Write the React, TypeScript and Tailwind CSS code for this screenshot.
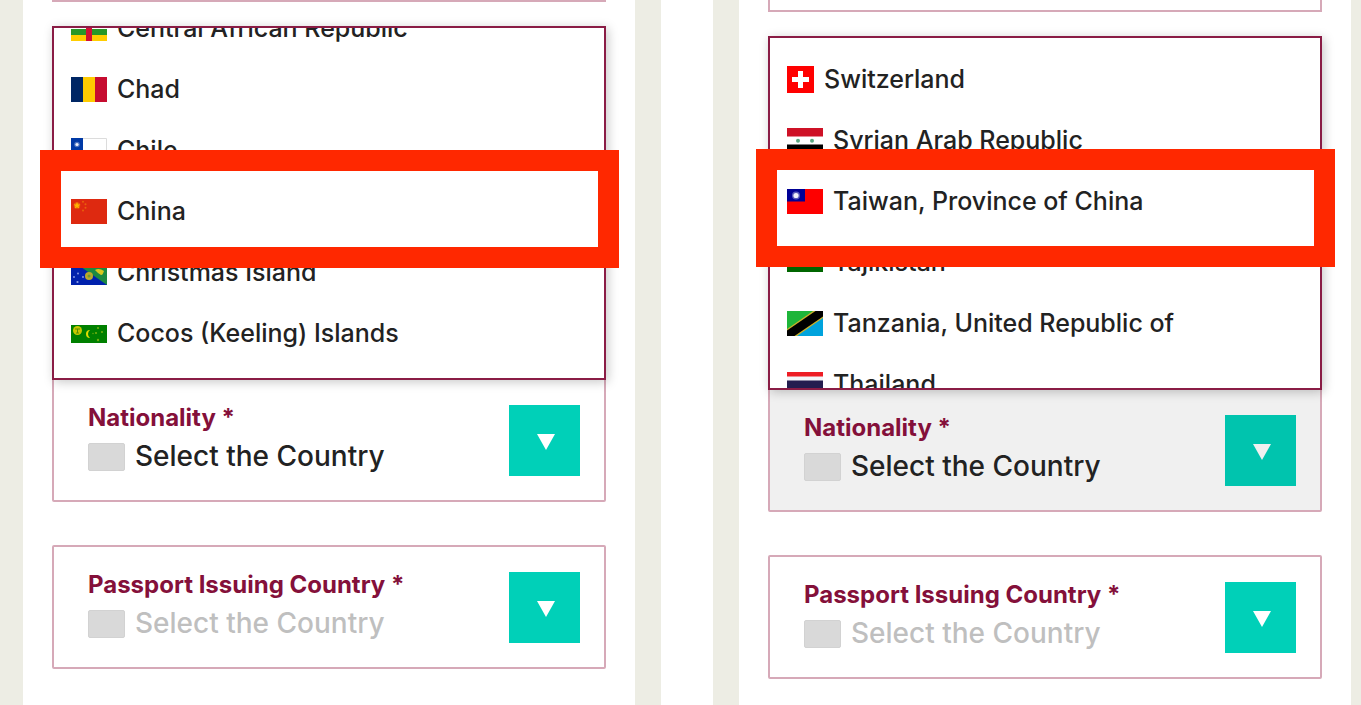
import type { ReactNode } from "react";
import clsx from "clsx";

type Country = { name: string; flag: ReactNode };

/* Flags, all drawn on a 36 wide grid except Switzerland */
function Flag({ w = 36, h = 25, children }: { w?: number; h?: number; children: ReactNode }) {
  return (
    <svg width={w} height={h} viewBox={`0 0 ${w} ${h}`} className="shrink-0" aria-hidden="true">
      {children}
    </svg>
  );
}

const centralAfrican = (
  <Flag>
    <rect width="36" height="7" fill="#002f6c" />
    <rect y="7" width="36" height="6" fill="#fff" />
    <rect y="13" width="36" height="6" fill="#289728" />
    <rect y="19" width="36" height="6" fill="#ffcd00" />
    <rect x="15" width="6" height="25" fill="#d21034" />
  </Flag>
);

const chad = (
  <Flag>
    <rect width="12" height="25" fill="#002664" />
    <rect x="12" width="12" height="25" fill="#fecb00" />
    <rect x="24" width="12" height="25" fill="#c60c30" />
  </Flag>
);

const chile = (
  <Flag>
    <rect width="36" height="25" fill="#fff" />
    <path d="M12 .5h23.500v24" fill="none" stroke="#dcdcdc" />
    <rect y="12.500" width="36" height="12.500" fill="#d52b1e" />
    <rect width="12" height="12.500" fill="#0039a6" />
    <circle cx="6" cy="6.500" r="2.800" fill="#fff" opacity=".3" />
    <circle cx="6" cy="6.500" r="1.600" fill="#fff" opacity=".9" />
  </Flag>
);

const china = (
  <Flag>
    <rect width="36" height="25" fill="#de2910" />
    <circle cx="6" cy="6.500" r="3.200" fill="#f0780a" opacity=".7" />
    <path d="M6 3l1 2.500 2.500.1-2 1.500.7 2.500L6 8.200 3.800 9.600l.7-2.500-2-1.500L5 5.500z" fill="#ffb400" />
    <g fill="#ea600c">
      <circle cx="12" cy="2.800" r="1" />
      <circle cx="14.500" cy="5.200" r="1" />
      <circle cx="14.500" cy="8.800" r="1" />
      <circle cx="12" cy="11.500" r="1" />
    </g>
  </Flag>
);

const christmasIsland = (
  <Flag>
    <rect width="36" height="25" fill="#0021ad" />
    <path d="M0 0h36v25z" fill="#1c8a42" />
    <circle cx="18" cy="16" r="4" fill="#b9a92a" />
    <circle cx="18" cy="16" r="1.500" fill="#6f9a34" />
    <path d="M24 10c3-2 6-1 9 1-1 2-1 4-3 4-2-1-4-3-6-5z" fill="#d8c820" />
    <g fill="#8fa0e8">
      <circle cx="3" cy="17" r=".9" />
      <circle cx="7" cy="13.500" r=".9" />
      <circle cx="12" cy="17" r=".9" />
      <circle cx="6.500" cy="22" r="1.100" />
    </g>
  </Flag>
);

const cocosIslands = (
  <Flag h={18}>
    <rect width="36" height="18" fill="#008000" />
    <circle cx="6.500" cy="5.500" r="4.500" fill="#c8c800" />
    <path d="M4 4h5M6.500 4v4M5 8h3" stroke="#5a8f00" strokeWidth="1" />
    <path d="M19 5a4 4 0 1 0 0 8 5 5 0 0 1 0-8z" fill="#e0dc00" />
    <g fill="#6fae10">
      <circle cx="27" cy="3" r="1.100" />
      <circle cx="31" cy="7" r="1.100" />
      <circle cx="25" cy="8" r="1.100" />
      <circle cx="27" cy="15" r="1.200" />
      <circle cx="22" cy="8.500" r=".7" />
    </g>
  </Flag>
);

const switzerland = (
  <Flag w={27} h={27}>
    <rect width="27" height="27" fill="#f00" />
    <path d="M11 5h5v6h6v5h-6v6h-5v-6H5v-5h6z" fill="#fff" />
  </Flag>
);

const syria = (
  <Flag>
    <rect width="36" height="25" fill="#fff" />
    <rect width="36" height="8.500" fill="#ce1126" />
    <rect y="16.500" width="36" height="8.500" fill="#000" />
    <circle cx="11" cy="12.700" r="2" fill="#5aa882" />
    <circle cx="25" cy="12.700" r="2" fill="#5aa882" />
  </Flag>
);

const taiwan = (
  <Flag>
    <rect width="36" height="25" fill="#fe0000" />
    <rect width="18" height="12.500" fill="#000095" />
    <circle cx="9" cy="6.500" r="4" fill="#fff" opacity=".35" />
    <circle cx="9" cy="6.500" r="2.600" fill="#fff" opacity=".9" />
  </Flag>
);

const tajikistan = (
  <Flag h={18}>
    <rect width="36" height="18" fill="#fff" />
    <rect width="36" height="5" fill="#c00" />
    <rect y="12" width="36" height="6" fill="#060" />
  </Flag>
);

const tanzania = (
  <Flag>
    <path d="M0 0h36L0 25z" fill="#1eb53a" />
    <path d="M36 0v25H0z" fill="#00a3dd" />
    <path d="M0 25v-7L26 0h10v7L10 25z" fill="#c9b12a" />
    <path d="M0 25v-5.500L28.500 0H36v5.500L7.500 25z" fill="#000" />
  </Flag>
);

const thailand = (
  <Flag>
    <rect width="36" height="25" fill="#f4f5f8" />
    <rect width="36" height="4.500" fill="#ed1c24" />
    <rect y="8.500" width="36" height="8.500" fill="#241d4f" />
    <rect y="20.500" width="36" height="4.500" fill="#ed1c24" />
  </Flag>
);

const leftCountries: Country[] = [
  { name: "Central African Republic", flag: centralAfrican },
  { name: "Chad", flag: chad },
  { name: "Chile", flag: chile },
  { name: "China", flag: china },
  { name: "Christmas Island", flag: christmasIsland },
  { name: "Cocos (Keeling) Islands", flag: cocosIslands },
];

const rightCountries: Country[] = [
  { name: "Switzerland", flag: switzerland },
  { name: "Syrian Arab Republic", flag: syria },
  { name: "Taiwan, Province of China", flag: taiwan },
  { name: "Tajikistan", flag: tajikistan },
  { name: "Tanzania, United Republic of", flag: tanzania },
  { name: "Thailand", flag: thailand },
];

function CountryList({
  countries,
  listClass,
  markClass,
}: {
  countries: Country[];
  listClass: string;
  markClass: string;
}) {
  return (
    <div className="relative z-10 mt-6">
      <div className="h-[354px] overflow-hidden border-2 border-[#8a1c45] bg-white shadow-[2px_2px_10px_rgba(0,0,0,0.22)]">
        <ul className={listClass}>
          {countries.map((c) => (
            <li key={c.name}>
              <button
                type="button"
                className="flex h-[61px] w-full items-center gap-[10px] px-[17px] text-left text-[25px] font-medium whitespace-nowrap text-[#222]"
              >
                {c.flag}
                {c.name}
              </button>
            </li>
          ))}
        </ul>
      </div>
      {/* Red highlight box */}
      <div
        className={clsx(
          "pointer-events-none absolute -right-[13px] -left-3 h-[118px] border-[21px] border-[#ff2800]",
          markClass
        )}
      />
    </div>
  );
}

function CountryField({
  id,
  label,
  className,
  active,
  muted,
}: {
  id: string;
  label: string;
  className?: string;
  active?: boolean;
  muted?: boolean;
}) {
  return (
    <div
      className={clsx(
        "flex h-[124px] items-start justify-between rounded-xs border-2 border-[#d6a9b8] pt-[25px] pr-6 pl-[34px]",
        active ? "bg-[#f0f0f0]" : "bg-white",
        className
      )}
    >
      <div className="min-w-0 flex-1">
        <label htmlFor={id} className="block text-[24px] leading-[26px] font-bold whitespace-nowrap text-[#84103a]">
          {label}
        </label>
        <div className="mt-[7px] flex items-center gap-[10px]">
          <span className="h-7 w-[37px] shrink-0 rounded-xs border border-[#d2d2d2] bg-[#d9d9d9]" />
          <select
            id={id}
            className={clsx(
              "w-full appearance-none bg-transparent pb-0.5 text-[28px] leading-9 font-medium outline-none",
              muted ? "text-[#bfbfbf]" : "text-[#222]"
            )}
          >
            <option>Select the Country</option>
          </select>
        </div>
      </div>
      <button
        type="button"
        aria-label={`Open ${label}`}
        className={clsx(
          "flex size-[71px] shrink-0 items-center justify-center",
          active ? "bg-[#00c4ae] text-[#f0f0f0]" : "bg-[#00d0b8] text-white"
        )}
      >
        <svg width="18" height="16" viewBox="0 0 18 16" className="mt-0.5 ml-0.5" fill="currentColor" aria-hidden="true">
          <path d="M0 0h18L9 16z" />
        </svg>
      </button>
    </div>
  );
}

export default function App() {
  return (
    <main className="flex min-h-screen gap-[52px] bg-white font-['Inter','Liberation_Sans',sans-serif]">
      <section className="flex-1 border-r-[26px] border-l-[23px] border-[#edede4] px-[29px] pb-9">
        {/* Bottom edge of the field above */}
        <div className="h-0.5 border-b-2 border-[#d6a9b8]" />
        <CountryList countries={leftCountries} listClass="-mt-[30px]" markClass="top-[124px]" />
        <CountryField id="nationality-a" label="Nationality *" className="-mt-0.5" />
        <CountryField id="passport-a" label="Passport Issuing Country *" className="mt-[43px]" muted />
      </section>

      <section className="flex-1 border-r-[10px] border-l-[26px] border-[#edede4] px-[29px] pb-[26px]">
        <div className="h-3 border-x-2 border-b-2 border-[#d6a9b8]" />
        <CountryList countries={rightCountries} listClass="pt-[11px]" markClass="top-[113px]" />
        <CountryField id="nationality-b" label="Nationality *" className="-mt-0.5" active />
        <CountryField id="passport-b" label="Passport Issuing Country *" className="mt-[43px]" muted />
      </section>
    </main>
  );
}
